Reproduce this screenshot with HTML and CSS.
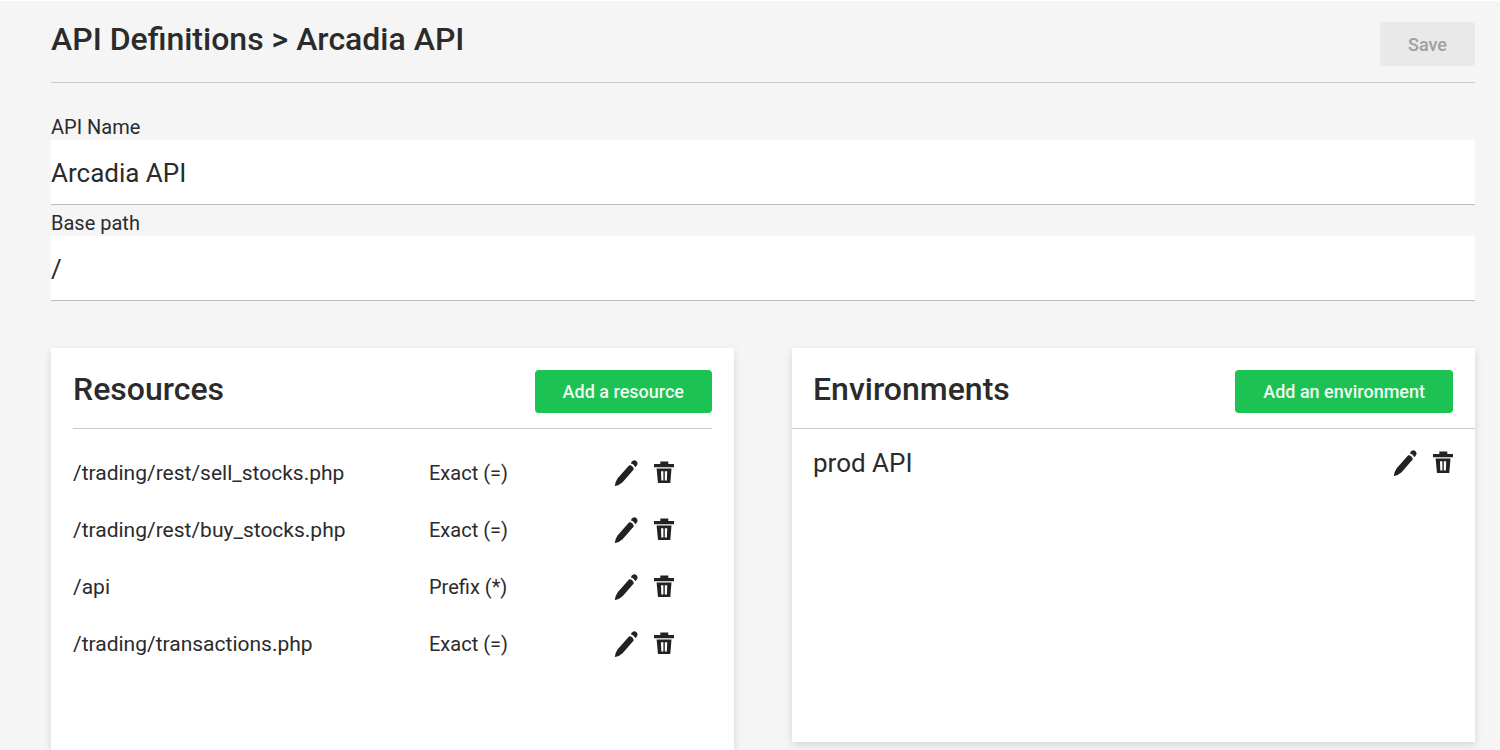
FILE: index.html
```html
<!DOCTYPE html>
<html lang="en">
<head>
<meta charset="utf-8">
<meta name="viewport" content="width=device-width, initial-scale=1">
<title>API Definitions</title>
<link rel="stylesheet" href="styles.css">
</head>
<body>
<svg class="sprite" aria-hidden="true">
  <symbol id="edit" viewBox="0 0 24 28">
    <path d="M15.200 6.200Q17 6 18.400 7.400Q19.900 8.800 19.700 10.500L8.600 23.300Q5.500 26.200 1.300 27Q.8 27 .9 26.500Q1.400 22.600 3.700 19.300Z"/>
    <path d="M16.900 4.400Q17.300 2.500 18.900 1.700Q20.900.8 22.500 2.300Q24.100 4 23.200 5.800Q22.500 7.500 21 8.300Q20.600 5.300 16.900 4.400Z"/>
  </symbol>
  <symbol id="trash" viewBox="0 0 22 24">
    <path d="M1 3h6.300V.5h8V3H21v3.200H1z"/>
    <path fill-rule="evenodd" d="M3.600 7.500h14.900L17.300 22H5zM8 10.300 8.300 19.500h2.100V10.300zM11.800 10.300v9.200h2.100l.3-9.200z"/>
  </symbol>
</svg>
<main class="page">
  <header class="page-header">
    <h1 class="title">API Definitions &gt; Arcadia API</h1>
    <button class="button" type="button" disabled>Save</button>
  </header>

  <form class="fields">
    <div class="field">
      <label class="field-label" for="api-name">API Name</label>
      <input class="field-input" id="api-name" type="text" value="Arcadia API">
    </div>
    <div class="field">
      <label class="field-label" for="base-path">Base path</label>
      <input class="field-input" id="base-path" type="text" value="/">
    </div>
  </form>

  <div class="cards">
    <section class="card resources">
      <header class="card-header">
        <h2 class="title">Resources</h2>
        <button class="button primary" type="button">Add a resource</button>
      </header>
      <table class="resource-table">
        <tbody>
          <tr>
            <td>/trading/rest/sell_stocks.php</td>
            <td class="match">Exact (=)</td>
            <td class="row-actions"><div class="actions">
              <button class="icon-button" type="button" aria-label="Edit"><svg class="edit"><use href="#edit"/></svg></button>
              <button class="icon-button" type="button" aria-label="Delete"><svg class="trash"><use href="#trash"/></svg></button>
            </div></td>
          </tr>
          <tr>
            <td>/trading/rest/buy_stocks.php</td>
            <td class="match">Exact (=)</td>
            <td class="row-actions"><div class="actions">
              <button class="icon-button" type="button" aria-label="Edit"><svg class="edit"><use href="#edit"/></svg></button>
              <button class="icon-button" type="button" aria-label="Delete"><svg class="trash"><use href="#trash"/></svg></button>
            </div></td>
          </tr>
          <tr>
            <td>/api</td>
            <td class="match">Prefix (*)</td>
            <td class="row-actions"><div class="actions">
              <button class="icon-button" type="button" aria-label="Edit"><svg class="edit"><use href="#edit"/></svg></button>
              <button class="icon-button" type="button" aria-label="Delete"><svg class="trash"><use href="#trash"/></svg></button>
            </div></td>
          </tr>
          <tr>
            <td>/trading/transactions.php</td>
            <td class="match">Exact (=)</td>
            <td class="row-actions"><div class="actions">
              <button class="icon-button" type="button" aria-label="Edit"><svg class="edit"><use href="#edit"/></svg></button>
              <button class="icon-button" type="button" aria-label="Delete"><svg class="trash"><use href="#trash"/></svg></button>
            </div></td>
          </tr>
        </tbody>
      </table>
    </section>

    <section class="card environments">
      <header class="card-header">
        <h2 class="title">Environments</h2>
        <button class="button primary" type="button">Add an environment</button>
      </header>
      <div class="environment">
        <span>prod API</span>
        <div class="actions">
          <button class="icon-button" type="button" aria-label="Edit"><svg class="edit"><use href="#edit"/></svg></button>
          <button class="icon-button" type="button" aria-label="Delete"><svg class="trash"><use href="#trash"/></svg></button>
        </div>
      </div>
    </section>
  </div>
</main>
</body>
</html>
```

FILE: styles.css
```css
* {
  box-sizing: border-box;
}

body {
  margin: 0;
  background: #f5f5f5;
  color: #2b2b2b;
  font: 20px/28px Roboto, "Liberation Sans", sans-serif;
}

.sprite {
  display: none;
}

.page {
  display: flex;
  flex-direction: column;
  min-height: 100vh;
  padding: 0 25px 0 51px;
  border-top: 1px solid #fff;
}

.page-header {
  display: flex;
  justify-content: space-between;
  align-items: flex-start;
  padding: 21px 0 16px;
  border-bottom: 1px solid #ccc;
}

.title {
  margin: 0;
  font-size: 32px;
  font-weight: 500;
  line-height: 38px;
}

.page-header .title {
  line-height: 34px;
}

.button {
  height: 44px;
  padding: 1px 28px 0;
  border: 0;
  border-radius: 4px;
  background: #e9e9e9;
  color: #a0a0a0;
  font: 500 18px/42px Roboto, "Liberation Sans", sans-serif;
}

.primary {
  height: 43px;
  background: #1cc252;
  color: #effbf2;
}

.fields {
  padding-top: 29px;
}

.field {
  display: flex;
  flex-direction: column;
  height: 96px;
}

.field-label {
  padding-top: 2px;
  line-height: 26px;
}

.field-input {
  height: 65px;
  width: 100%;
  padding: 2px 0 0;
  border: 0;
  border-bottom: 1px solid #bbb;
  background: #fff;
  color: #2b2b2b;
  font: 26px/32px Roboto, "Liberation Sans", sans-serif;
}

.cards {
  flex: 1;
  display: grid;
  grid-template-columns: 1fr 1fr;
  gap: 58px;
  padding-top: 44px;
}

.card {
  background: #fff;
  box-shadow: 0 3px 8px rgba(0, 0, 0, 0.13);
}

.resources {
  padding: 0 22px;
}

.environments {
  margin-bottom: 8px;
}

.card-header {
  display: flex;
  justify-content: space-between;
  align-items: flex-start;
  padding: 22px 0 15px;
  border-bottom: 1px solid #ccc;
}

.environments .card-header {
  padding-left: 21px;
  padding-right: 22px;
}

.resource-table {
  width: 100%;
  margin-top: 15px;
  table-layout: fixed;
  border-collapse: collapse;
  font-size: 21px;
}

.resource-table td {
  height: 57px;
  padding: 0;
}

.resource-table .match {
  width: 185px;
  font-size: 20px;
}

.resource-table .row-actions {
  width: 98px;
}

.actions {
  display: flex;
  align-items: center;
  gap: 15px;
}

.icon-button {
  display: flex;
  padding: 0;
  border: 0;
  background: none;
  color: #222;
}

.icon-button svg {
  fill: currentColor;
}

.edit {
  width: 24px;
  height: 28px;
}

.trash {
  width: 22px;
  height: 24px;
}

.environment {
  display: flex;
  justify-content: space-between;
  align-items: center;
  padding: 18px 21px 0;
  font-size: 26px;
  line-height: 32px;
}
```
